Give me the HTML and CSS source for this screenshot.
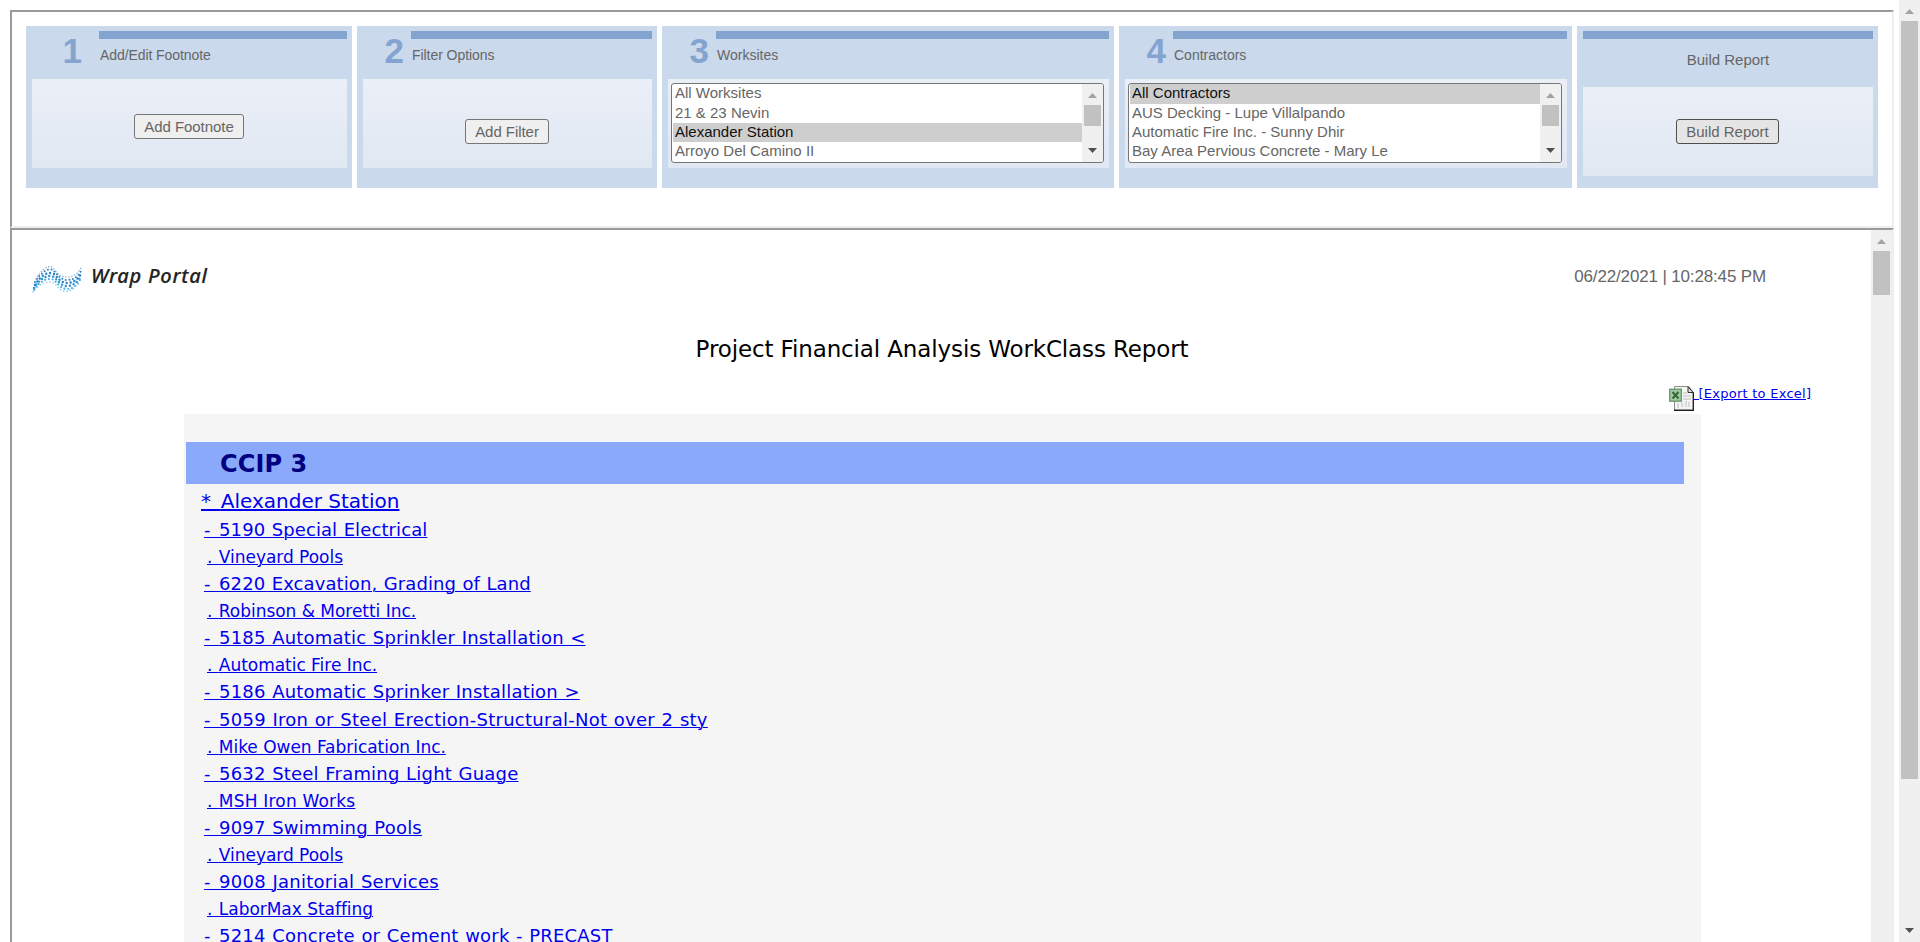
FILE: index.html
```html
<!DOCTYPE html>
<html lang="en">
<head>
<meta charset="utf-8">
<title>Project Financial Analysis WorkClass Report</title>
<link rel="stylesheet" href="styles.css">
</head>
<body>
<div class="page">
  <main class="frames">
    <section class="frame steps">
      <div class="panel p1">
        <div class="head"><span class="num">1</span><div class="label"><i class="bar"></i><span>Add/Edit Footnote</span></div></div>
        <div class="box"><button class="btn raised">Add Footnote</button></div>
      </div>
      <div class="panel p2">
        <div class="head"><span class="num">2</span><div class="label"><i class="bar"></i><span>Filter Options</span></div></div>
        <div class="box"><button class="btn">Add Filter</button></div>
      </div>
      <div class="panel p3">
        <div class="head"><span class="num">3</span><div class="label"><i class="bar"></i><span>Worksites</span></div></div>
        <div class="box">
          <div class="list">
            <ul><li>All Worksites</li><li>21 &amp; 23 Nevin</li><li class="on">Alexander Station</li><li>Arroyo Del Camino II</li></ul>
            <div class="scroll small"><i class="up"></i><i class="thumb"></i><i class="down"></i></div>
          </div>
        </div>
      </div>
      <div class="panel p4">
        <div class="head"><span class="num">4</span><div class="label"><i class="bar"></i><span>Contractors</span></div></div>
        <div class="box">
          <div class="list">
            <ul><li class="on">All Contractors</li><li>AUS Decking - Lupe Villalpando</li><li>Automatic Fire Inc. - Sunny Dhir</li><li>Bay Area Pervious Concrete - Mary Le</li></ul>
            <div class="scroll small"><i class="up"></i><i class="thumb"></i><i class="down"></i></div>
          </div>
        </div>
      </div>
      <div class="panel p5">
        <div class="head"><div class="label"><i class="bar"></i><span>Build Report</span></div></div>
        <div class="box"><button class="btn active">Build Report</button></div>
      </div>
    </section>
    <section class="frame report">
      <div class="doc">
        <header class="top">
          <div class="logo">
            <svg class="wave" width="54" height="32" viewBox="0 0 54 32" fill="none" stroke-linecap="round">
              <path d="M6 17C11 8 18 3 22 5C27 10 29 15 37 15C44 15 49 11 52 4" stroke="#7fa9cf" stroke-width="1.5" stroke-dasharray="0 3"/>
              <path d="M5 20C11 10 18 6 23 8C28 13 31 18 37 18C44 18 49 14 52 7" stroke="#2f80c4" stroke-width="2" stroke-dasharray="0 3.6"/>
              <path d="M5 23C11 13 18 9 24 12C28 16 31 21 37 21C43 21 49 17 52 10" stroke="#2484c8" stroke-width="2.400" stroke-dasharray="0 4"/>
              <path d="M4 26C10 16 18 12 24 15C28 19 31 24 37 24C43 24 48 20 51 14" stroke="#2b93d4" stroke-width="2.400" stroke-dasharray="0 4"/>
              <path d="M4 28C10 19 17 15 24 18C28 22 31 27 37 27C43 27 47 23 50 18" stroke="#45ace2" stroke-width="2.100" stroke-dasharray="0 3.8"/>
              <path d="M3 30C9 22 17 18 24 21C28 25 31 29.500 36 29.500C42 29 46 25 49 21" stroke="#7cc9ee" stroke-width="1.6" stroke-dasharray="0 3.4"/>
            </svg>
            <span class="brand">Wrap Portal</span>
          </div>
          <time class="stamp">06/22/2021 | 10:28:45 PM</time>
        </header>
        <h1 class="title">Project Financial Analysis WorkClass Report</h1>
        <div class="export">
          <svg width="25" height="25" viewBox="0 0 25 25">
            <path d="M5.500.5H20L24 6V24.500H5.500Z" fill="#f4f4f4" stroke="#8c8c8c"/>
            <path d="M5 24.300H24.500V6" fill="none" stroke="#222" stroke-width="1.400"/>
            <path d="M19 .8V6.500H24.200Z" fill="#ddd" stroke="#333"/>
            <path d="M14 7H18M14 10H22M14 13H22M9 17V22M13 16V21M17 15V21M20 16V21" stroke="#d0d0d0" stroke-width="1.500"/>
            <rect x=".7" y="3.200" width="11.600" height="12" fill="#a3c9a3" stroke="#5c9160" stroke-width="1.200"/>
            <path d="M3.500 6L9.500 12.500M9.500 6L3.500 12.500" stroke="#2f6b37" stroke-width="2"/>
          </svg><a href="#">&nbsp;[Export to Excel]</a>
        </div>
        <div class="sheet">
          <h2 class="group">CCIP 3</h2>
          <div class="rows">
            <a class="site" href="#"><span class="mark">* </span>Alexander Station</a>
            <a class="cls" href="#"><span class="mark">- </span>5190 Special Electrical</a>
            <a class="con" href="#"><span class="mark">. </span>Vineyard Pools</a>
            <a class="cls" href="#"><span class="mark">- </span>6220 Excavation, Grading of Land</a>
            <a class="con" href="#"><span class="mark">. </span>Robinson &amp; Moretti Inc.</a>
            <a class="cls wide" href="#"><span class="mark">- </span>5185 Automatic Sprinkler Installation &lt;</a>
            <a class="con" href="#"><span class="mark">. </span>Automatic Fire Inc.</a>
            <a class="cls wide" href="#"><span class="mark">- </span>5186 Automatic Sprinker Installation &gt;</a>
            <a class="cls wider" href="#"><span class="mark">- </span>5059 Iron or Steel Erection-Structural-Not over 2 sty</a>
            <a class="con" href="#"><span class="mark">. </span>Mike Owen Fabrication Inc.</a>
            <a class="cls wide" href="#"><span class="mark">- </span>5632 Steel Framing Light Guage</a>
            <a class="con wide" href="#"><span class="mark">. </span>MSH Iron Works</a>
            <a class="cls wide" href="#"><span class="mark">- </span>9097 Swimming Pools</a>
            <a class="con" href="#"><span class="mark">. </span>Vineyard Pools</a>
            <a class="cls wider" href="#"><span class="mark">- </span>9008 Janitorial Services</a>
            <a class="con" href="#"><span class="mark">. </span>LaborMax Staffing</a>
            <a class="cls wide" href="#"><span class="mark">- </span>5214 Concrete or Cement work - PRECAST</a>
          </div>
        </div>
      </div>
      <div class="scroll inner"><i class="up"></i><i class="thumb"></i></div>
    </section>
  </main>
  <div class="scroll outer"><i class="up"></i><i class="thumb"></i><i class="down"></i></div>
</div>
</body>
</html>
```
FILE: styles.css
```css
* { box-sizing: border-box; }
body { margin: 0; background: #fff; font-family: "Liberation Sans", Arial, sans-serif; color: #666; overflow: hidden; }
.page { display: flex; justify-content: space-between; height: 942px; overflow: hidden; }
.frames { width: 1884px; margin: 10px 0 0 10px; display: flex; flex-direction: column; }
.frame { border: 2px solid; border-color: #9a9a9a #eee #eee #9a9a9a; }

.steps { height: 218px; padding: 14px; display: grid; grid-template-columns: 326px 300px 452px 453px 301px; grid-template-rows: 162px; gap: 5px; }
.panel { background: #cad9ec; padding: 5px 5px 0 6px; display: flex; flex-direction: column; }
.head { height: 48px; display: flex; flex: none; }
.num { width: 48px; padding: 2px 7px 0 0; text-align: right; font: bold 35px/36px "Liberation Sans", Arial, sans-serif; color: #84a4d0; }
.p1 .num { width: 67px; padding-right: 17px; }
.label { flex: 1; display: flex; flex-direction: column; font-size: 14px; line-height: 16px; }
.label span { padding: 8px 0 0 1px; }
.p1 .label span { letter-spacing: -.08px; }
.p2 .label span { letter-spacing: -.06px; }
.bar { display: block; height: 8px; background: #84a4d0; }
.box { height: 89px; background: linear-gradient(#ebeff7, #e0e8f2); display: flex; justify-content: center; align-items: center; }
.p5 .head { height: 56px; }
.p5 .label { font-size: 15px; text-align: center; }
.p5 .label span { padding: 13px 0 0; }
.btn { height: 25px; padding: 0 9px; border: 1px solid #767676; border-radius: 3px; background: #efefef; color: #666; font: 15px/22px "Liberation Sans", Arial, sans-serif; letter-spacing: -.05px; white-space: nowrap; margin: 16px 1px 0 0; }
.btn.raised { margin-top: 6px; }
.btn.active { background: #e5e5e5; border-color: #4f4f4f; margin-top: 0; letter-spacing: 0; }
.p3 .box, .p4 .box { justify-content: flex-start; align-items: flex-start; padding: 4px 5px 0 3px; }
.list { flex: 1; height: 80px; border: 1px solid #767676; border-radius: 3px; background: #fff; display: flex; overflow: hidden; }
.list ul { flex: 1; list-style: none; margin: 0; padding: 0 0 0 1px; font-size: 15px; line-height: 17px; }
.list li { height: 19px; padding-left: 2px; }
.list li:first-child { height: 20px; }
.list .on { background: #cecece; color: #101010; }

.scroll { flex: none; width: 21px; background: #f0f0f0; display: flex; flex-direction: column; align-items: center; }
.up, .down { width: 9px; height: 5px; background: #a3a3a3; clip-path: polygon(50% 0, 100% 100%, 0 100%); }
.down { background: #505050; clip-path: polygon(0 0, 100% 0, 50% 100%); margin-top: auto; }
.thumb { width: 17px; background: #c1c1c1; margin-top: 7px; }
.small .up { margin-top: 9px; }
.small .thumb { height: 21px; }
.small .down { margin-bottom: 9px; }
.outer { padding: 9px 0; }
.outer .thumb { height: 758px; }
.inner { padding-top: 9px; }
.inner .thumb { height: 44px; }

.report { flex: 1; display: flex; border-bottom: 0; min-height: 0; }
.doc { flex: 1; min-width: 0; font-family: "DejaVu Sans", Verdana, sans-serif; color: #000; }
.top { display: flex; justify-content: space-between; padding: 32px 105px 0 18px; height: 100px; }
.logo { display: flex; }
.brand { margin: 0 0 0 7px; font: italic 500 20px/28px "Noto Sans", "Open Sans", sans-serif; letter-spacing: .75px; color: #222; -webkit-text-stroke: .2px #222; }
.stamp { padding-top: 1px; font: 17px/28px "Liberation Sans", Arial, sans-serif; letter-spacing: -.15px; color: #666; }
.title { margin: 0; padding-left: 1px; text-align: center; font-size: 23px; font-weight: 400; line-height: 38px; letter-spacing: -.13px; }
.export { margin-top: 18px; padding-left: 1657px; height: 28px; display: flex; font-size: 13px; line-height: 16px; white-space: nowrap; letter-spacing: .26px; }
.export svg { flex: none; }
a { color: #00e; text-decoration: underline; text-decoration-thickness: 1px; text-underline-offset: 1px; text-decoration-skip-ink: auto; }
.sheet { margin: 0 0 0 172px; width: 1517px; padding: 28px 17px 0 2px; background: #f5f5f5; height: 530px; }
.group { margin: 0; height: 42px; padding: 1px 0 0 34px; background: #8ba9fb; color: #000080; font-size: 24px; line-height: 42px; letter-spacing: .1px; }
.rows { display: flex; flex-direction: column; align-items: flex-start; white-space: pre; }
.site { margin: 0 0 -2px 15px; padding-top: 1px; font-size: 20px; line-height: 33px; text-decoration-thickness: 2px; }
.site .mark { letter-spacing: 1.7px; }
.cls { margin-left: 18px; font-size: 18px; line-height: 28px; letter-spacing: .1px; word-spacing: .6px; }
.cls.wide { letter-spacing: .2px; }
.cls.wider { letter-spacing: .26px; }
.cls .mark { letter-spacing: 1.1px; }
.con { margin-left: 21px; font-size: 17px; line-height: 26px; letter-spacing: -.03px; }
.con.wide { letter-spacing: .2px; }
.con .mark { letter-spacing: .5px; }
```
